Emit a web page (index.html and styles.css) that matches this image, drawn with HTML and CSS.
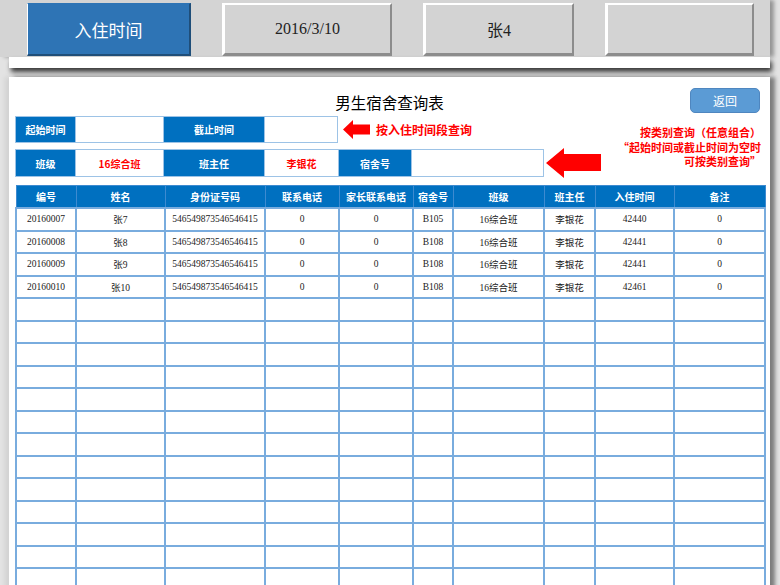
FILE: index.html
```html
<!DOCTYPE html>
<html lang="zh-CN">
<head>
    <meta charset="UTF-8">
    <title>男生宿舍查询表</title>
    <link rel="stylesheet" href="styles.css">
</head>
<body>
    <div class="topbar">
        <div class="tab tab-active w1">入住时间</div>
        <div class="tab w2">2016/3/10</div>
        <div class="tab w3">张4</div>
        <div class="tab w4"></div>
    </div>
    <div class="strip"></div>

    <div class="panel">
        <div class="panel-head">
            <div></div>
            <h2>男生宿舍查询表</h2>
            <button class="back">返回</button>
        </div>

        <div class="query">
            <div class="rows">
                <div class="row row-time">
                    <div class="fields">
                        <div class="lbl c60">起始时间</div>
                        <div class="val c88"></div>
                        <div class="lbl c101">截止时间</div>
                        <div class="val c73"></div>
                    </div>
                    <svg class="arrow-sm" width="27" height="19" viewBox="0 0 27 19">
                        <polygon points="0,9.5 10,0 10,4.5 27,4.5 27,14.5 10,14.5 10,19" fill="#ff0000"/>
                    </svg>
                    <span class="hint">按入住时间段查询</span>
                </div>
                <div class="row row-type">
                    <div class="fields">
                        <div class="lbl c60">班级</div>
                        <div class="val red c88">16综合班</div>
                        <div class="lbl c101">班主任</div>
                        <div class="val red c74">李银花</div>
                        <div class="lbl c73">宿舍号</div>
                        <div class="val c131"></div>
                    </div>
                    <svg class="arrow-lg" width="55" height="30" viewBox="0 0 55 30">
                        <polygon points="0,15 18,0 18,6 55,6 55,23 18,23 18,30" fill="#ff0000"/>
                    </svg>
                </div>
            </div>
            <div class="note">
                <div>按类别查询（任意组合）</div>
                <div>“起始时间或截止时间为空时</div>
                <div>可按类别查询”</div>
            </div>
        </div>

        <table class="grid">
            <colgroup>
                <col style="width:60px"><col style="width:89px"><col style="width:100px">
                <col style="width:74px"><col style="width:74px"><col style="width:40px">
                <col style="width:91px"><col style="width:51px"><col style="width:79px">
                <col style="width:91px">
            </colgroup>
            <thead>
                <tr>
                    <th>编号</th><th>姓名</th><th>身份证号码</th><th>联系电话</th><th>家长联系电话</th>
                    <th>宿舍号</th><th>班级</th><th>班主任</th><th>入住时间</th><th>备注</th>
                </tr>
            </thead>
            <tbody id="rows">
                <tr><td>20160007</td><td>张7</td><td>546549873546546415</td><td>0</td><td>0</td><td>B105</td><td>16综合班</td><td>李银花</td><td>42440</td><td>0</td></tr>
                <tr><td>20160008</td><td>张8</td><td>546549873546546415</td><td>0</td><td>0</td><td>B108</td><td>16综合班</td><td>李银花</td><td>42441</td><td>0</td></tr>
                <tr><td>20160009</td><td>张9</td><td>546549873546546415</td><td>0</td><td>0</td><td>B108</td><td>16综合班</td><td>李银花</td><td>42441</td><td>0</td></tr>
                <tr><td>20160010</td><td>张10</td><td>546549873546546415</td><td>0</td><td>0</td><td>B108</td><td>16综合班</td><td>李银花</td><td>42461</td><td>0</td></tr>
            </tbody>
        </table>
    </div>

    <script>
        // pad the sheet with empty rows
        const body = document.getElementById('rows');
        for (let i = 0; i < 13; i++) {
            const tr = document.createElement('tr');
            for (let j = 0; j < 10; j++) {
                tr.appendChild(document.createElement('td'));
            }
            body.appendChild(tr);
        }
    </script>
</body>
</html>
```

FILE: styles.css
```css
body {
    margin: 0;
    width: 780px;
    height: 585px;
    overflow: hidden;
    background-color: #e3e3e3;
    font-family: "Noto Sans CJK SC", sans-serif;
}

.topbar {
    display: flex;
    gap: 31px;
    width: 770px;
    height: 57px;
    box-sizing: border-box;
    padding: 3px 0 0 27px;
    background-color: #d4d4d4;
    box-shadow: 4px 0 4px rgba(0, 0, 0, 0.35);
}

.tab {
    height: 53px;
    box-sizing: border-box;
    display: flex;
    align-items: center;
    justify-content: center;
    background-color: #d3d3d3;
    border-top: 2px solid #fff;
    border-left: 3px solid #fff;
    border-right: 2px solid #8c8c8c;
    border-bottom: 3px solid #8c8c8c;
    font-family: "Liberation Serif", "Noto Sans CJK SC", serif;
    font-size: 16px;
    color: #222;
}

.tab-active {
    background-color: #2e74b5;
    border-top: 1px solid #2e74b5;
    border-left: 1px solid #fff;
    border-right: 2px solid #1f4e79;
    border-bottom: 2px solid #1f4e79;
    font-family: "Noto Sans CJK SC", sans-serif;
    font-size: 17px;
    color: #fff;
}

.w1 { width: 164px; }
.w2 { width: 170px; }
.w3 { width: 151px; }
.w4 { width: 149px; }

.strip {
    margin-left: 9px;
    width: 761px;
    height: 11px;
    background-color: #fff;
    box-shadow: 2px 4px 5px rgba(0, 0, 0, 0.75);
}

.panel {
    margin-top: 9px;
    margin-left: 9px;
    width: 761px;
    height: 520px;
    box-sizing: border-box;
    padding: 11px 6px 0 6px;
    background-color: #fff;
    box-shadow: 5px 0 4px rgba(0, 0, 0, 0.45), -4px 0 5px rgba(0, 0, 0, 0.08);
}

.panel-head {
    display: grid;
    grid-template-columns: 1fr auto 1fr;
    align-items: center;
    height: 28px;
}

.panel-head h2 {
    margin: 0;
    font-size: 15.5px;
    font-weight: normal;
    color: #000;
}

.back {
    justify-self: end;
    margin-right: 4px;
    margin-top: -3px;
    width: 70px;
    height: 25px;
    border: 1px solid #4f86bf;
    border-radius: 5px;
    background-color: #5b9bd5;
    color: #fff;
    font-family: "Noto Sans CJK SC", sans-serif;
    font-size: 12px;
    padding: 0;
}

.query {
    display: flex;
    align-items: flex-start;
}

.rows {
    display: flex;
    flex-direction: column;
    gap: 6px;
}

.row {
    display: flex;
    align-items: center;
}

.fields {
    display: flex;
    border: 1px solid #9dc3e6;
    background-color: #9dc3e6;
    gap: 1px;
}

.row-time .fields { height: 27px; box-sizing: border-box; }
.row-type .fields { height: 28px; box-sizing: border-box; }

.lbl, .val {
    display: flex;
    align-items: center;
    justify-content: center;
    font-size: 10px;
    font-weight: bold;
}

.lbl {
    background-color: #0070c0;
    color: #fff;
}

.val {
    background-color: #fff;
}

.red {
    color: #ff0000;
}

.c60 { width: 59px; }
.c73 { width: 72px; }
.c74 { width: 73px; }
.c88 { width: 87px; }
.c101 { width: 100px; }
.c131 { width: 131px; }

.arrow-sm {
    margin-left: 5px;
}

.hint {
    margin-left: 6px;
    color: #ff0000;
    font-size: 12px;
    font-weight: bold;
}

.arrow-lg {
    margin: -1px 0 -1px 2px;
}

.note {
    margin-left: auto;
    margin-top: 9px;
    margin-right: 3px;
    text-align: right;
    color: #ff0000;
    font-size: 11px;
    font-weight: bold;
}

.note div {
    height: 14.5px;
    line-height: 14.5px;
}

.grid {
    margin-top: 8px;
    width: 749px;
    border-collapse: collapse;
    table-layout: fixed;
}

.grid th {
    height: 21px;
    padding: 0;
    background-color: #0070c0;
    color: #fff;
    font-size: 10px;
    font-weight: bold;
    border: 1px solid #3d8ad0;
}

.grid td {
    height: 20.5px;
    padding: 0;
    text-align: center;
    border: 2px solid #79acde;
    font-family: "Liberation Serif", "Noto Sans CJK SC", serif;
    font-size: 9.5px;
    color: #222;
}
```
